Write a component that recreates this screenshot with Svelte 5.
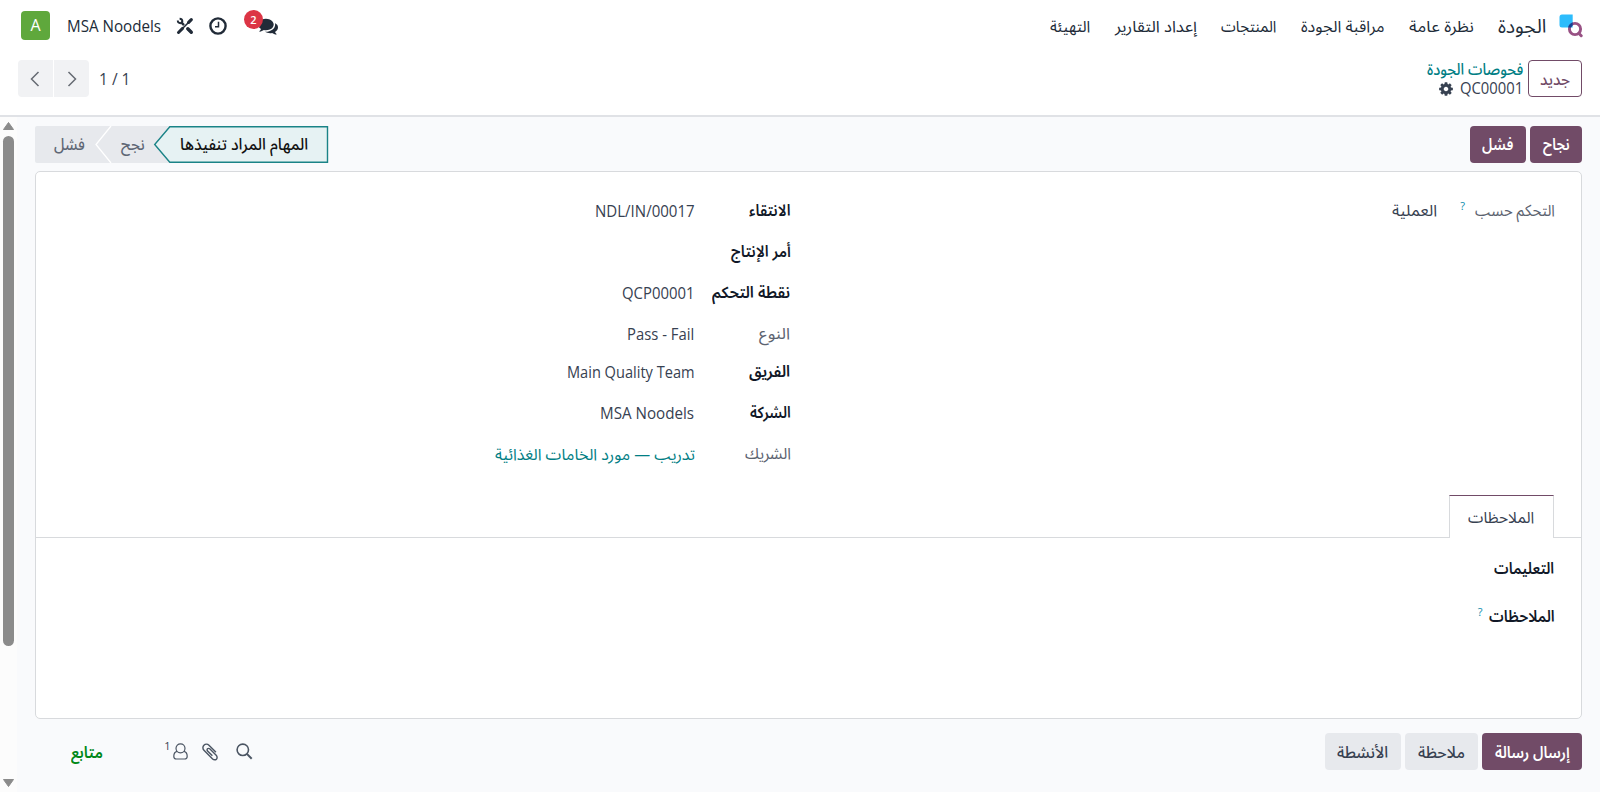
<script>
  const menu = [
    { text: 'نظرة عامة', w: 65 },
    { text: 'مراقبة الجودة', w: 84 },
    { text: 'المنتجات', w: 55 },
    { text: 'إعداد التقارير', w: 82 },
    { text: 'التهيئة', w: 40 }
  ];

  const fields = [
    { label: 'الانتقاء', lw: 41, value: 'NDL/IN/00017', vw: 100, strong: true, h: 41 },
    { label: 'أمر الإنتاج', lw: 60, strong: true, h: 41 },
    { label: 'نقطة التحكم', lw: 78, value: 'QCP00001', vw: 72, strong: true, h: 40.5 },
    { label: 'النوع', lw: 31, value: 'Pass - Fail', vw: 67, h: 38.5 },
    { label: 'الفريق', lw: 41, value: 'Main Quality Team', vw: 128, strong: true, h: 41 },
    { label: 'الشركة', lw: 41, value: 'MSA Noodels', vw: 94, strong: true, h: 41 },
    { label: 'الشريك', lw: 46, value: 'تدريب — مورد الخامات الغذائية', vw: 200, link: true, h: 41 }
  ];

  // Scales a label horizontally so that it fills its box whatever the font metrics are.
  function fit(node, width) {
    node.style.transform = `scaleX(${width / node.offsetWidth})`;
  }
</script>

{#snippet t(text, w)}
  <span class="fit" style:width="{w}px"><span class="fit-in" use:fit={w}>{text}</span></span>
{/snippet}

<div class="app" dir="rtl">
  <header class="navbar">
    <svg class="logo" width="24" height="24" viewBox="0 0 24 24">
      <clipPath id="tile"><path d="M3 .5H13.700V13.500H.500V3Q.500 .5 3 .5z" /></clipPath>
      <path d="M3 .5H13.700V13.500H3Q.5 13.500 .5 11V3Q.5 .5 3 .5z" fill="#2dbcfc" />
      <circle cx="16" cy="15" r="5.600" fill="none" stroke="#985184" stroke-width="2.900" />
      <path d="M20 19.500l2.200 2.200" stroke="#985184" stroke-width="3" stroke-linecap="round" />
      <circle cx="16" cy="15" r="5.600" fill="none" stroke="#144496" stroke-width="2.900" clip-path="url(#tile)" />
    </svg>
    <div class="brand">{@render t('الجودة', 48)}</div>
    <nav>
      {#each menu as m}<a>{@render t(m.text, m.w)}</a>{/each}
    </nav>
    <div class="systray" dir="ltr">
      <span class="avatar">A</span>
      <span class="company">{@render t('MSA Noodels', 94)}</span>
      <svg class="tools" width="18" height="18" viewBox="0 0 18 18" fill="none" stroke="#212b38">
        <path d="M5 5.200L8 8.200M11.300 11.300l3.800 3.700" stroke-width="2.400" />
        <path d="M11.800 11.800l3.500 3.500" stroke-width="3.400" stroke-linecap="round" />
        <path d="M1.800 3.400Q1.800 6.400 4.900 6.100L6.300 4.700Q6.500 1.800 3.600 1.800" stroke-width="2" />
        <path d="M15.300 2.700L12.600 5.400" stroke-width="3.200" stroke-linecap="round" />
        <path d="M12.500 5.500L7 11" stroke-width="1.600" />
        <path d="M6.600 11.400L2.500 15.500" stroke-width="3" stroke-linecap="round" />
      </svg>
      <svg class="clock" width="18" height="18" viewBox="0 0 18 18" fill="none" stroke="#212b38">
        <circle cx="9" cy="9" r="7.600" stroke-width="2.400" />
        <path d="M9.500 4.800V9.700H6" stroke-width="1.500" />
      </svg>
      <span class="chat">
        <svg width="20" height="20" viewBox="0 0 1792 1792" fill="#212b38">
          <path d="M1408 768q0 139-94 257t-256.500 186.500-353.500 68.500q-86 0-176-16-124 88-278 128-36 9-86 16h-3q-11 0-20.500-8t-11.500-21q-1-3-1-6.500t.5-6.500 2-6l2.500-5 3.500-5.500 4-5 4.500-5 4-4.500q5-6 23-25t26-29.500 22.500-29 25-38.500 20.500-44q-124-72-195-177t-71-224q0-139 94-257t256.500-186.500 353.500-68.500 353.500 68.500 256.500 186.500 94 257zm384 256q0 120-71 224.500t-195 176.500q10 24 20.500 44t25 38.500 22.500 29 26 29.500 23 25q1 1 4 4.500t4.500 5 4 5 3.500 5.500l2.500 5 2 6 .5 6.500-1 6.500q-3 14-13 22t-22 7q-50-7-86-16-154-40-278-128-90 16-176 16-271 0-472-132 58 4 88 4 161 0 309-45t264-129q125-92 192-212t67-254q0-77-23-152 129 71 204 178t75 230z" />
        </svg>
        <b class="badge">2</b>
      </span>
    </div>
  </header>

  <div class="control">
    <button class="new">{@render t('جديد', 30)}</button>
    <div class="crumbs">
      <a class="crumb">{@render t('فحوصات الجودة', 96)}</a>
      <div class="current">
        <span>{@render t('QC00001', 63)}</span>
        <svg width="16" height="16" viewBox="0 0 1792 1792" fill="#374151">
          <path d="M1152 896q0-106-75-181t-181-75-181 75-75 181 75 181 181 75 181-75 75-181zm512-109v222q0 12-8 23t-20 13l-185 28q-19 54-39 91 35 50 107 138 10 12 10 25t-9 23q-27 37-99 108t-94 71q-12 0-26-9l-138-108q-44 23-91 38-16 136-29 186-7 28-36 28h-222q-14 0-24.500-8.500t-11.500-21.500l-28-184q-49-16-90-37l-141 107q-10 9-25 9-14 0-25-11-126-114-165-168-7-10-7-23 0-12 8-23 15-21 51-66.500t54-70.500q-27-50-41-99l-183-27q-13-2-21-12.500t-8-23.500v-222q0-12 8-23t19-13l186-28q14-46 39-92-40-57-107-138-10-12-10-24 0-10 9-23 26-36 98.500-107.500t94.500-71.500q13 0 26 10l138 107q44-23 91-38 16-136 29-186 7-28 36-28h222q14 0 24.500 8.500t11.500 21.500l28 184q49 16 90 37l142-107q9-9 24-9 13 0 25 10 129 119 165 170 7 8 7 22 0 12-8 23-15 21-51 66.500t-54 70.500q26 50 41 98l183 28q13 2 21 12.500t8 23.500z" />
        </svg>
      </div>
    </div>
    <div class="pager" dir="ltr">
      <button class="prev"><svg width="10" height="16" viewBox="0 0 10 16"><path d="M8.500 1L1.500 8l7 7" /></svg></button>
      <button class="next"><svg width="10" height="16" viewBox="0 0 10 16"><path d="M1.500 1l7 7-7 7" /></svg></button>
      <span>{@render t('1 / 1', 31)}</span>
    </div>
  </div>

  <div class="body">
    <main>
      <div class="status">
        <button class="primary b52">{@render t('نجاح', 27)}</button>
        <button class="primary b56">{@render t('فشل', 31)}</button>
        <div class="stages">
          <svg class="shape" width="294" height="37" viewBox="0 0 294 37">
            <path d="M2 0H160V37H2Q0 37 0 35V2Q0 0 2 0z" fill="#e7e9ed" />
            <path d="M76 0L61 18.500L76 37" fill="none" stroke="#fff" stroke-width="1.300" />
            <path d="M292.500 .8H134.800L119.700 18.500L134.800 36.200H292.500Z" fill="#e6f2f3" stroke="#1a8387" stroke-width="1.400" />
          </svg>
          <span class="stage on">{@render t('المهام المراد تنفيذها', 128)}</span>
          <span class="stage mid">{@render t('نجح', 24)}</span>
          <span class="stage">{@render t('فشل', 31)}</span>
        </div>
      </div>

      <section class="sheet">
        <div class="groups">
          <div class="group">
            <div class="row first">
              <span class="label light">{@render t('التحكم حسب', 80)}<sup class="help far">?</sup></span>
              <span class="value">{@render t('العملية', 45)}</span>
            </div>
          </div>
          <div class="group">
            {#each fields as f}
              <div class="row" style:height="{f.h}px">
                <span class="label" class:light={!f.strong}>{@render t(f.label, f.lw)}</span>
                {#if f.value}<span class="value" class:latin={!f.link} class:link={f.link}>{@render t(f.value, f.vw)}</span>{/if}
              </div>
            {/each}
          </div>
        </div>
        <div class="tabs">
          <span class="edge"></span>
          <a class="tab">{@render t('الملاحظات', 66)}</a>
          <span class="rest"></span>
        </div>
        <div class="notes">
          <div class="note label">{@render t('التعليمات', 60)}</div>
          <div class="note label">{@render t('الملاحظات', 66)}<sup class="help">?</sup></div>
        </div>
      </section>

      <div class="chatter">
        <button class="primary c1">{@render t('إرسال رسالة', 75)}</button>
        <button class="grey c2">{@render t('ملاحظة', 47)}</button>
        <button class="grey c3">{@render t('الأنشطة', 51)}</button>
        <div class="actions" dir="ltr">
          <span class="follow">{@render t('متابع', 32)}</span>
          <sup class="count">1</sup>
          <svg class="user" width="15" height="17" viewBox="0 0 15 17" fill="none" stroke="#4b5563" stroke-width="1.200">
            <circle cx="7.500" cy="5.300" r="4.500" />
            <path d="M4 8.300Q.8 9 .8 13.200Q.8 16 3.400 16H11.600Q14.200 16 14.200 13.200Q14.200 9 11 8.300" />
          </svg>
          <svg class="clip" width="20" height="20" viewBox="0 0 1792 1792" fill="#4b5563">
            <path d="M1596 1385q0 117-79 196t-196 79q-135 0-235-100l-777-776q-113-115-113-271 0-159 110-270t269-111q158 0 273 113l605 606q10 10 10 22 0 16-30.500 46.500t-46.500 30.500q-13 0-23-10l-606-607q-79-77-181-77-106 0-179 75t-73 181q0 105 76 181l776 777q63 63 145 63 64 0 106-42t42-106q0-82-63-145l-581-581q-26-24-60-24-29 0-48 19t-19 48q0 32 25 59l410 410q10 10 10 22 0 16-31 47t-47 31q-12 0-22-10l-410-410q-63-61-63-149 0-82 57-139t139-57q88 0 149 63l581 581q100 98 100 235z" />
          </svg>
          <svg width="17" height="17" viewBox="0 0 17 17" fill="none" stroke="#4b5563" stroke-width="1.600">
            <circle cx="6.800" cy="6.800" r="5.700" /><path d="M10.900 10.900L15.700 15.700" stroke-width="2" />
          </svg>
        </div>
      </div>
    </main>
    <div class="scroll">
      <svg width="11" height="8" viewBox="0 0 11 8"><path d="M5.500 .5L10.500 7.500H.5z" fill="#8b8b8b" stroke="#8b8b8b" stroke-linejoin="round" /></svg>
      <div class="thumb"></div>
      <svg class="down" width="11" height="8" viewBox="0 0 11 8"><path d="M5.500 7.500L10.500 .5H.5z" fill="#8b8b8b" stroke="#8b8b8b" stroke-linejoin="round" /></svg>
    </div>
  </div>
</div>

<style>
  :global(body) { margin: 0; background: #fff; }
  .app { width: 1600px; height: 792px; overflow: hidden; display: flex; flex-direction: column; color: #374151; font: 16px/24px "Open Sans", "Noto Sans Arabic", "Noto Sans", "DejaVu Sans", sans-serif; }
  .app * { box-sizing: border-box; }
  button { font: inherit; color: #374151; border: 0; padding: 0; margin: 0; height: 37px; border-radius: 4px; display: flex; align-items: center; justify-content: center; }
  svg { display: block; flex: none; }
  .fit { display: inline-flex; justify-content: flex-start; flex: none; }
  .fit-in { flex: none; white-space: nowrap; transform-origin: right center; }
  [dir='ltr'] .fit-in { transform-origin: left center; }

  .navbar { height: 52px; display: flex; align-items: center; padding: 0 17px 0 21px; color: #212b38; }
  .logo { margin-top: -1px; }
  .brand { font-size: 19px; margin-right: 13px; }
  nav { display: flex; gap: 24.5px; margin-right: 24px; margin-top: -1px; }
  .systray { display: flex; align-items: center; margin-right: auto; }
  .avatar { width: 29px; height: 29px; margin-top: -1px; border-radius: 4px; background: #5fa83c; color: #fff; text-align: center; line-height: 29px; }
  .company { margin-left: 16.5px; font-size: 15.5px; }
  .tools { margin: -1px 0 0 15.5px; }
  .clock { margin: -1px 0 0 15px; }
  .chat { position: relative; margin: -1px 0 0 31px; }
  .badge { position: absolute; left: -14px; top: -6px; width: 19px; height: 19px; border-radius: 50%; background: #dc3545; color: #fff; font-size: 11px; line-height: 19px; text-align: center; font-weight: 600; }

  .control { height: 65px; flex: none; display: flex; padding: 8px 18px 0 17.5px; border-bottom: 2px solid #e0e2e6; }
  .new { width: 54px; border: 1px solid #714b67; color: #714b67; background: #fff; font-weight: 500; }
  .crumbs { margin-right: 5px; line-height: 19px; }
  .crumb { display: flex; color: #017e84; font-weight: 500; }
  .current { display: flex; align-items: center; gap: 6px; font-size: 15.5px; }
  .pager { margin-right: auto; display: flex; align-items: center; height: 37px; }
  .pager button { width: 35px; background: #f1f2f4; }
  .pager .prev { border-radius: 4px 0 0 4px; }
  .pager .next { border-radius: 0 4px 4px 0; margin-left: 1.5px; }
  .pager path { fill: none; stroke: #666b73; stroke-width: 1.500; }
  .pager > span { margin-left: 10px; }

  .body { flex: 1; display: flex; background: #f9fafc; }
  main { flex: 1; padding: 8.5px 18px 0 17.5px; }
  .scroll { width: 17px; background: #fcfcfc; display: flex; flex-direction: column; align-items: center; padding: 5px 0 5px; }
  .thumb { width: 11px; height: 510px; border-radius: 6px; background: #8b8b8b; margin-top: 6px; }
  .down { margin-top: auto; }

  .status { display: flex; height: 37px; gap: 4px; }
  .primary { background: #714b67; color: #fff; font-weight: 600; }
  .b52 { width: 52px; } .b56 { width: 56px; }
  .stages { position: relative; width: 294px; margin-right: auto; display: flex; align-items: center; padding-right: 20px; color: #5f6775; font-weight: 500; }
  .shape { position: absolute; inset: 0; }
  .stage { position: relative; margin-right: 36.5px; }
  .stage.mid { margin-right: 35.5px; }
  .stage.on { margin: 0; color: #111; }

  .sheet { margin-top: 8.5px; height: 548px; border: 1.5px solid #d8dadd; border-radius: 5px; background: #fff; }
  .groups { height: 322.5px; display: grid; grid-template-columns: 764px 1fr; padding: 26px 26.5px 0; }
  .row { display: flex; align-items: flex-start; }
  .group .label { width: 96px; }
  .first .label { width: 117px; }
  .label { display: flex; flex: none; color: #111827; font-weight: 600; }
  .label.light { color: #5c6370; font-weight: 400; }
  .value.latin { font-size: 15.5px; padding-top: 1px; }
  .value.link { color: #017e84; padding-top: 1px; }
  .help { font-size: 11px; line-height: 16px; color: #0a8bab; margin-right: 6px; font-weight: 500; }
  .help.far { margin-right: 9.5px; }
  .tabs { display: flex; height: 43px; color: #374151; }
  .edge { width: 27px; border-bottom: 1px solid #d8dadd; }
  .rest { flex: 1; border-bottom: 1px solid #d8dadd; }
  .tab { width: 105px; display: flex; align-items: center; justify-content: center; border: 1px solid #d8dadd; border-top: 1.5px solid #714b67; border-bottom: 0; }
  .notes { padding: 18px 26.5px 0; }
  .note { height: 48px; }

  .chatter { display: flex; margin-top: 14px; height: 37px; }
  .grey { background: #e7e9ed; font-weight: 500; }
  .c1 { width: 100px; } .c2 { width: 73px; margin-right: 4px; } .c3 { width: 76px; margin-right: 4px; }
  .actions { display: flex; align-items: center; margin-right: auto; width: 218px; justify-content: flex-end; }
  .follow { color: #008818; font-weight: 600; margin-right: auto; margin-left: 36px; }
  .count { font-size: 11px; line-height: 12px; margin: -11px 2px 0 0; }
  .clip { margin: 0 15.5px 0 12.5px; }
</style>
